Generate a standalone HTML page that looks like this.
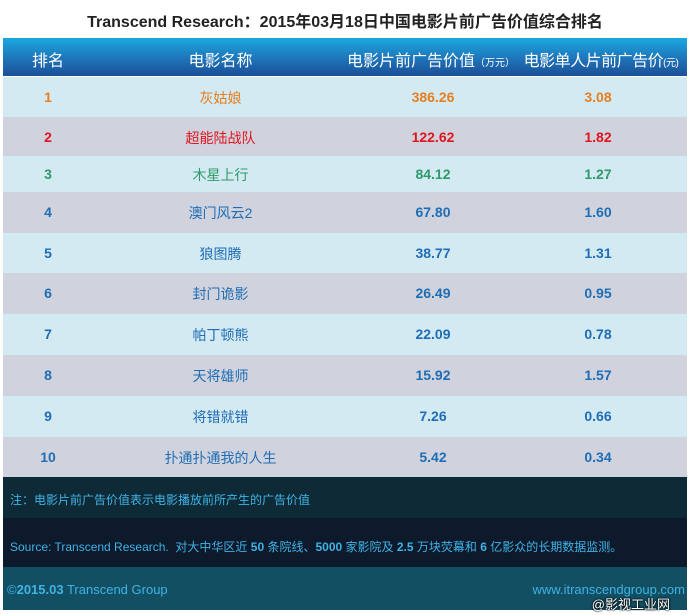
<!DOCTYPE html>
<html><head><meta charset="utf-8"><style>
body{margin:0;width:690px;height:615px;background:#fff;position:relative;overflow:hidden;font-family:"Liberation Sans","Noto Sans CJK SC",sans-serif}
.t{position:absolute;left:0;width:690px;top:8px;text-align:center;font-size:16px;font-weight:bold;color:#222}
.hd{position:absolute;left:3px;width:684px;top:38px;height:38px;background:linear-gradient(#1aa8e0,#1e6fb5 60%,#1b4f96);color:#fff;font-size:16px}
.c{position:absolute;text-align:center;white-space:nowrap}
.row{position:absolute;left:3px;width:684px;font-size:14px}
.n{font-family:"Liberation Sans Narrow","Liberation Sans",sans-serif;font-weight:bold;font-size:14px}
.a{background:#d3eaf3}.b{background:#d0d3dd}
.band{position:absolute;left:3px;width:684px;color:#3fb3e6;font-size:12px}
</style></head><body>
<div class="t">Transcend Research：2015年03月18日中国电影片前广告价值综合排名</div>
<div class="hd">
<div class="c" style="left:0;width:90px;top:9px">排名</div>
<div class="c" style="left:130px;width:175px;top:9px">电影名称</div>
<div class="c" style="left:338px;width:180px;top:9px">电影片前广告价值<span style="font-size:10px">（万元）</span></div>
<div class="c" style="left:512px;width:172px;top:9px;letter-spacing:-0.5px">电影单人片前广告价<span style="font-size:10px">(元)</span></div>
</div>
<div id="rows"></div>
<div class="row a" style="top:77px;height:40px;color:#e67e22"><div class="c n" style="left:0;width:90px;top:12px">1</div><div class="c" style="left:130px;width:175px;top:11px">灰姑娘</div><div class="c n" style="left:370px;width:120px;top:12px">386.26</div><div class="c n" style="left:535px;width:120px;top:12px">3.08</div></div>
<div class="row b" style="top:117px;height:39px;color:#e0141e"><div class="c n" style="left:0;width:90px;top:12px">2</div><div class="c" style="left:130px;width:175px;top:11px">超能陆战队</div><div class="c n" style="left:370px;width:120px;top:12px">122.62</div><div class="c n" style="left:535px;width:120px;top:12px">1.82</div></div>
<div class="row a" style="top:156px;height:36px;color:#2e9a6a"><div class="c n" style="left:0;width:90px;top:10px">3</div><div class="c" style="left:130px;width:175px;top:9px">木星上行</div><div class="c n" style="left:370px;width:120px;top:10px">84.12</div><div class="c n" style="left:535px;width:120px;top:10px">1.27</div></div>
<div class="row b" style="top:192px;height:41px;color:#1f6db5"><div class="c n" style="left:0;width:90px;top:12px">4</div><div class="c" style="left:130px;width:175px;top:11px">澳门风云2</div><div class="c n" style="left:370px;width:120px;top:12px">67.80</div><div class="c n" style="left:535px;width:120px;top:12px">1.60</div></div>
<div class="row a" style="top:233px;height:40px;color:#1f6db5"><div class="c n" style="left:0;width:90px;top:12px">5</div><div class="c" style="left:130px;width:175px;top:11px">狼图腾</div><div class="c n" style="left:370px;width:120px;top:12px">38.77</div><div class="c n" style="left:535px;width:120px;top:12px">1.31</div></div>
<div class="row b" style="top:273px;height:41px;color:#1f6db5"><div class="c n" style="left:0;width:90px;top:12px">6</div><div class="c" style="left:130px;width:175px;top:11px">封门诡影</div><div class="c n" style="left:370px;width:120px;top:12px">26.49</div><div class="c n" style="left:535px;width:120px;top:12px">0.95</div></div>
<div class="row a" style="top:314px;height:41px;color:#1f6db5"><div class="c n" style="left:0;width:90px;top:12px">7</div><div class="c" style="left:130px;width:175px;top:11px">帕丁顿熊</div><div class="c n" style="left:370px;width:120px;top:12px">22.09</div><div class="c n" style="left:535px;width:120px;top:12px">0.78</div></div>
<div class="row b" style="top:355px;height:41px;color:#1f6db5"><div class="c n" style="left:0;width:90px;top:12px">8</div><div class="c" style="left:130px;width:175px;top:11px">天将雄师</div><div class="c n" style="left:370px;width:120px;top:12px">15.92</div><div class="c n" style="left:535px;width:120px;top:12px">1.57</div></div>
<div class="row a" style="top:396px;height:41px;color:#1f6db5"><div class="c n" style="left:0;width:90px;top:12px">9</div><div class="c" style="left:130px;width:175px;top:11px">将错就错</div><div class="c n" style="left:370px;width:120px;top:12px">7.26</div><div class="c n" style="left:535px;width:120px;top:12px">0.66</div></div>
<div class="row b" style="top:437px;height:40px;color:#1f6db5"><div class="c n" style="left:0;width:90px;top:12px">10</div><div class="c" style="left:130px;width:175px;top:11px">扑通扑通我的人生</div><div class="c n" style="left:370px;width:120px;top:12px">5.42</div><div class="c n" style="left:535px;width:120px;top:12px">0.34</div></div>
<div class="band" style="top:477px;height:41px;background:#0e2a36"><div style="position:absolute;left:7px;top:14px">注：电影片前广告价值表示电影播放前所产生的广告价值</div></div>
<div class="band" style="top:518px;height:49px;background:#0d1a2c"><div style="position:absolute;left:7px;top:20px">Source: Transcend Research.&nbsp; 对大中华区近 <b>50</b> 条院线、<b>5000</b> 家影院及 <b>2.5</b> 万块荧幕和 <b>6</b> 亿影众的长期数据监测。</div></div>
<div class="band" style="top:567px;height:43px;background:#134f63;font-size:13px"><div style="position:absolute;left:4px;top:15px">©<b>2015.03</b> Transcend Group</div><div style="position:absolute;right:2px;top:15px">www.itranscendgroup.com</div></div>
<div style="position:absolute;right:20px;top:594px;font-size:13px;color:#fff;text-shadow:0 0 2px #000,0 0 2px #000">@影视工业网</div>
</body></html>
